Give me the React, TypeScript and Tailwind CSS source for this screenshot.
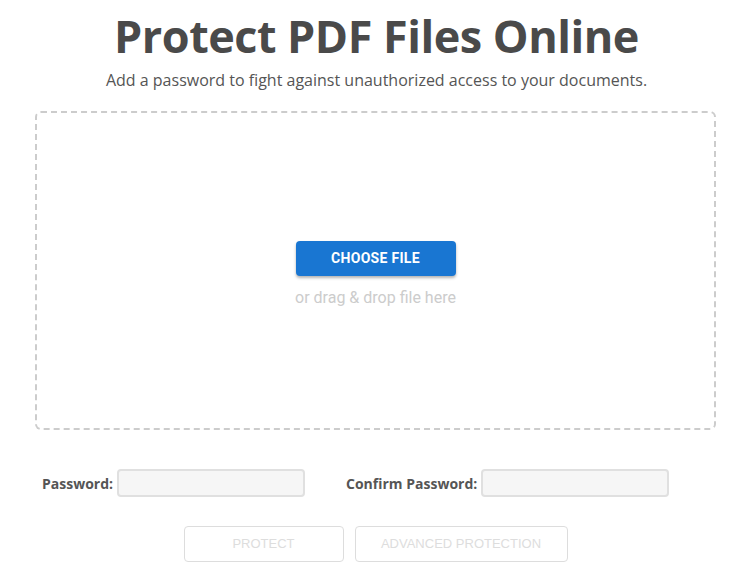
export default function App() {
  return (
    <div className="w-[753px] h-[576px] bg-white overflow-hidden font-['Open_Sans',sans-serif]">
      {/* Heading */}
      <div className="flex flex-col items-center pt-[8px]">
        <h1 className="text-[45px] leading-[56px] font-bold text-[#4a4a4a] tracking-[-0.5px]">
          Protect PDF Files Online
        </h1>
        <p className="mt-[4px] text-[16px] leading-[24px] text-[#555]">
          Add a password to fight against unauthorized access to your documents.
        </p>
      </div>

      {/* Drop zone */}
      <div className="mt-[19px] ml-[35px] w-[681px] h-[319px] border-2 border-dashed border-[#ccc] rounded-[6px] flex flex-col items-center justify-center font-['Roboto',sans-serif]">
        <button className="mt-[10px] w-[160px] h-[35px] rounded-[4px] bg-[#1976d2] text-white text-[14px] font-bold tracking-[0.3px] shadow-[0_2px_3px_rgba(0,0,0,0.3)]">
          CHOOSE FILE
        </button>
        <div className="mt-[10px] text-[16px] text-[#ccc]">or drag &amp; drop file here</div>
      </div>

      {/* Password fields */}
      <div className="mt-[39px] flex items-center pl-[42px]">
        <label className="text-[14px] font-bold text-[#555]">Password:</label>
        <input
          type="password"
          className="ml-[4px] w-[188px] h-[28px] bg-[#f6f6f6] border-2 border-[#e0e0e0] rounded-[4px]"
        />
        <label className="ml-[41px] text-[14px] font-bold text-[#555]">Confirm Password:</label>
        <input
          type="password"
          className="ml-[4px] w-[188px] h-[28px] bg-[#f6f6f6] border-2 border-[#e0e0e0] rounded-[4px]"
        />
      </div>

      {/* Actions */}
      <div className="mt-[29px] flex justify-center gap-[11px] pr-[2px] font-['Liberation_Sans',sans-serif]">
        <button className="w-[160px] h-[36px] border border-[#ddd] rounded-[4px] text-[13px] text-[#ddd]">
          PROTECT
        </button>
        <button className="w-[213px] h-[36px] border border-[#ddd] rounded-[4px] text-[13px] text-[#ddd]">
          ADVANCED PROTECTION
        </button>
      </div>
    </div>
  );
}
